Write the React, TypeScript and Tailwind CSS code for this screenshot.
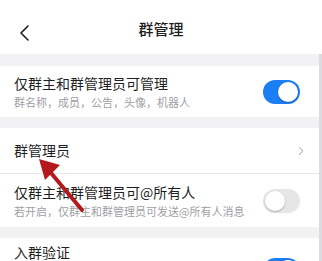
import { ChevronRight } from 'lucide-react';

const font = { fontFamily: '"Noto Sans CJK SC", "Noto Sans", sans-serif' };

function Toggle({ on }: { on: boolean }) {
  return (
    <div
      className={`w-[37px] h-[24px] rounded-full p-[2px] flex ${on ? 'bg-[#1b7ef2] justify-end' : 'bg-[#e6e6e8] justify-start'}`}
    >
      <div className="w-[20px] h-[20px] rounded-full bg-white shadow-[0_1px_2px_rgba(0,0,0,0.25)]" />
    </div>
  );
}

export default function App() {
  return (
    <div className="relative w-[322px] h-[261px] overflow-hidden bg-white text-[#1f1f1f]" style={font}>
      {/* Header */}
      <div className="h-[54px] flex items-center relative">
        <svg className="absolute left-[18px] top-[24px]" width="14" height="18" viewBox="0 0 14 18" fill="none" stroke="#1f1f1f" strokeWidth={1.6} strokeLinecap="round" strokeLinejoin="round">
          <path d="M10 2 L3 9 L10 16" />
        </svg>
        <div className="w-full text-center text-[15px] font-medium pt-[4px]">群管理</div>
      </div>

      <div className="border-r-[3px] border-[#dcdcde]">
        <div className="h-[12px] bg-[#f2f2f4]" />

        {/* Row 1 */}
        <div className="h-[51px] flex items-center justify-between pl-[14px] pr-[19px]">
          <div className="flex flex-col">
            <span className="text-[14px] leading-[19px]">仅群主和群管理员可管理</span>
            <span className="text-[11px] leading-[16px] text-[#a0a0a4] mt-[1px]">群名称，成员，公告，头像，机器人</span>
          </div>
          <Toggle on />
        </div>

        <div className="h-[11px] bg-[#f2f2f4]" />

        {/* Row 2 */}
        <div className="h-[46px] flex items-center justify-between pl-[14px] pr-[11px] border-b border-[#e8e8ea]">
          <span className="text-[14px]">群管理员</span>
          <ChevronRight size={14} strokeWidth={1.5} className="text-[#8a8a8e]" />
        </div>

        {/* Row 3 */}
        <div className="h-[53px] flex items-center justify-between pl-[14px] pr-[19px]">
          <div className="flex flex-col">
            <span className="text-[14px] leading-[19px]">仅群主和群管理员可@所有人</span>
            <span className="text-[11px] leading-[16px] text-[#a0a0a4] mt-[1px]">若开启，仅群主和群管理员可发送@所有人消息</span>
          </div>
          <Toggle on={false} />
        </div>

        <div className="h-[11px] bg-[#f2f2f4]" />

        {/* Row 4 */}
        <div className="h-[52px] flex items-start justify-between pl-[14px] pr-[19px] pt-[6px]">
          <span className="text-[14px] leading-[16px]">入群验证</span>
          <div className="mt-[14px]">
            <Toggle on />
          </div>
        </div>
      </div>

      {/* Red annotation arrow */}
      <svg className="absolute left-0 top-0 pointer-events-none" width="322" height="261" viewBox="0 0 322 261">
        <line x1="46" y1="167" x2="82" y2="210" stroke="#b3191c" strokeWidth={4} strokeLinecap="round" />
        <polygon points="39,159 60,165 45,180" fill="#b3191c" />
      </svg>
    </div>
  );
}
